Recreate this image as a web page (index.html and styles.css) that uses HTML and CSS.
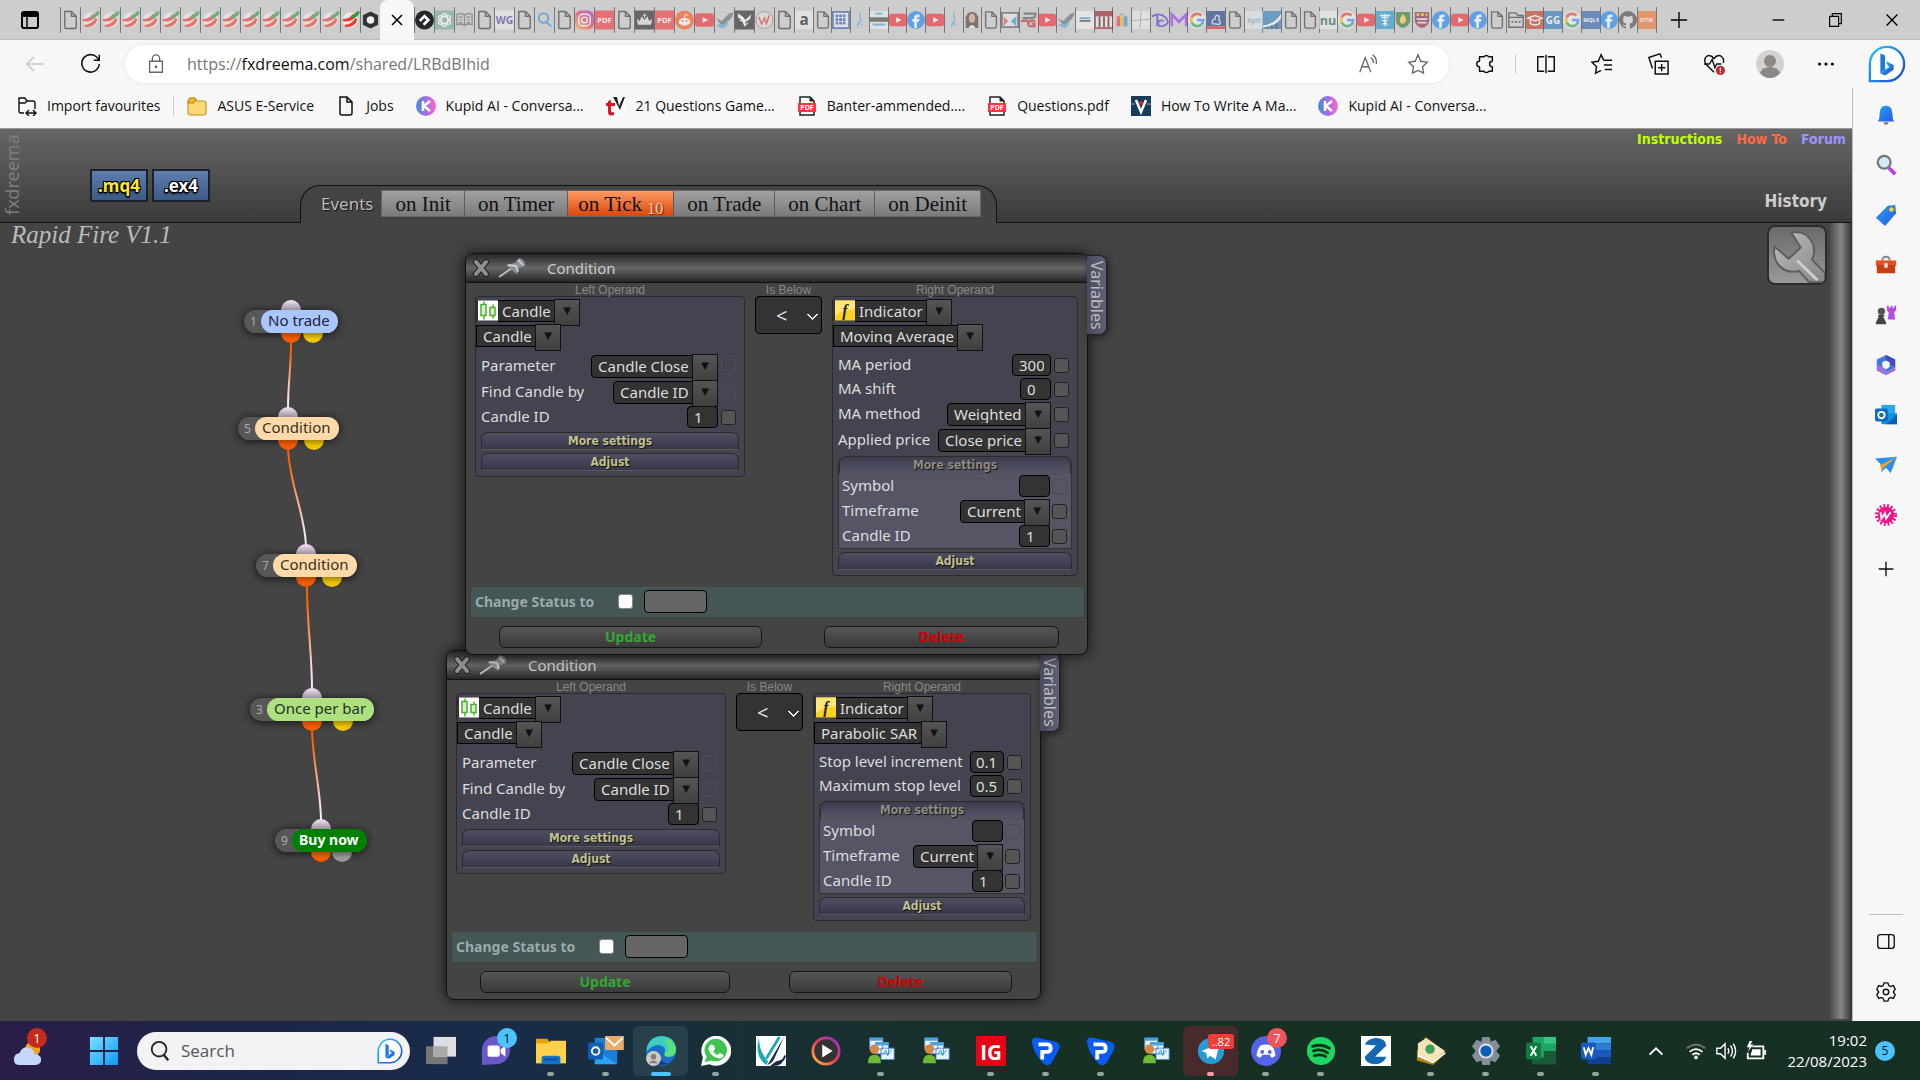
FILE: index.html
```html
<!DOCTYPE html>
<html lang="en">
<head>
    <meta charset="UTF-8">
    <meta name="viewport" content="width=device-width, initial-scale=1.0">
    <title>fxDreema - Rapid Fire V1.1</title>
    <link rel="stylesheet" href="styles.css">
</head>
<body>
    <!-- shared icons -->
    <svg class="defs" aria-hidden="true">
        <defs>
            <linearGradient id="g-kupid"><stop offset="0" stop-color="#3f8fdc"/><stop offset=".55" stop-color="#b06be0"/><stop offset="1" stop-color="#ff6ac0"/></linearGradient>
            <linearGradient id="g-insta" x1="0" y1="1" x2="1" y2="0"><stop offset="0" stop-color="#ffc13b"/><stop offset=".5" stop-color="#f0365f"/><stop offset="1" stop-color="#8a3ad0"/></linearGradient>
            <linearGradient id="g-bing" x1="0" y1="0" x2="1" y2="1"><stop offset="0" stop-color="#29c5f6"/><stop offset="1" stop-color="#1b48c8"/></linearGradient>
            <linearGradient id="g-blue" x1="0" y1="0" x2="1" y2="1"><stop offset="0" stop-color="#22a5f0"/><stop offset="1" stop-color="#2d55e8"/></linearGradient>
            <linearGradient id="g-metal" x1="0" y1="0" x2="1" y2="1"><stop offset="0" stop-color="#bdbdbd"/><stop offset="1" stop-color="#858585"/></linearGradient>
            <linearGradient id="g-win" x1="0" y1="0" x2="1" y2="1"><stop offset="0" stop-color="#7be0ff"/><stop offset="1" stop-color="#0a9bf5"/></linearGradient>
        </defs>
        <symbol id="file" viewBox="0 0 20 20"><path d="M4 1h7l5 5v11a2 2 0 0 1-2 2H6a2 2 0 0 1-2-2V1zM11 1v5h5" fill="none" stroke="currentColor" stroke-width="1.5"/></symbol>
        <symbol id="chili" viewBox="0 0 20 20"><circle cx="10" cy="10" r="8" fill="#eee"/><path d="M2 9c5 0 8-2 10-5l3 1c0 4-6 8-13 6z" fill="#ee3a30"/><path d="M4 15c5 0 9-3 11-7l2 1c0 5-6 10-13 8z" fill="#ee3a30"/><path d="M11 6l6-5 3 0-2 4-5 4z" fill="#2f9a3c"/></symbol>
        <symbol id="hexa" viewBox="0 0 20 20"><path d="M10 1l8 4v10l-8 4-8-4V5z" fill="#333"/><circle cx="10" cy="10" r="4" fill="#eee"/></symbol>
        <symbol id="diam" viewBox="0 0 20 20"><circle cx="10" cy="10" r="10" fill="#23262b"/><path d="M4 10l6-6 6 6-6 6-2-2 4-4-2-2-4 4z" fill="#fff"/></symbol>
        <symbol id="gpt" viewBox="0 0 20 20"><path d="M0 0h20v20H0z" fill="#74aa9c"/><g fill="none" stroke="#fff" stroke-width="1.300"><ellipse cx="10" cy="10" rx="3.500" ry="7"/><ellipse cx="10" cy="10" rx="3.500" ry="7" transform="rotate(60 10 10)"/><ellipse cx="10" cy="10" rx="3.500" ry="7" transform="rotate(120 10 10)"/></g></symbol>
        <symbol id="book" viewBox="0 0 20 20"><path d="M10 5C8 3 4 3 2 4v11c2-1 6-1 8 1 2-2 6-2 8-1V4c-2-1-6-1-8 1zv11M4 7h4M4 10h4M4 13h4M12 7h4M12 10h4M12 13h4" fill="none" stroke="#666" stroke-width="1.300"/></symbol>
        <symbol id="find" viewBox="0 0 20 20"><circle cx="9" cy="8" r="5" fill="none" stroke="#2d8be0" stroke-width="2"/><path d="M12 12l5 5" stroke="#2d8be0" stroke-width="2"/></symbol>
        <symbol id="insta" viewBox="0 0 20 20"><rect width="20" height="20" rx="6" fill="url(#g-insta)"/><rect x="4" y="4" width="12" height="12" rx="4" fill="none" stroke="#fff" stroke-width="1.500"/><circle cx="10" cy="10" r="3" fill="none" stroke="#fff" stroke-width="1.500"/></symbol>
        <symbol id="crown" viewBox="0 0 20 20"><path d="M0 0h20v20H0z" fill="#222"/><path d="M3 15l-1-6 3 2 2-5 3 4 3-4 2 5 3-2-1 6z" fill="#ddd"/><path d="M10 3v5M8 5h4" stroke="#ddd"/></symbol>
        <symbol id="reddit" viewBox="0 0 20 20"><circle cx="10" cy="10" r="10" fill="#ff5414"/><ellipse cx="10" cy="12" rx="6" ry="4" fill="#fff"/><circle cx="8" cy="11" r="1" fill="#ff5414"/><circle cx="12" cy="11" r="1" fill="#ff5414"/><path d="M10 8l1-4 3 1" stroke="#fff" fill="none"/></symbol>
        <symbol id="yt" viewBox="0 0 20 20"><rect y="3" width="20" height="14" rx="3" fill="#f22a30"/><path d="M8 7l6 3-6 3z" fill="#fff"/></symbol>
        <symbol id="rocket" viewBox="0 0 20 20"><path d="M1 8l6 3 8-8 5-1-3 6-6 6-4 2z" fill="#5d6b74"/><path d="M1 16q4-3 8-1l5-5q0 7-6 9z" fill="#58a6d8"/></symbol>
        <symbol id="wing" viewBox="0 0 20 20"><path d="M0 0h20v20H0z" fill="#222"/><path d="M3 3l6 4 2 3 6-6-1 5-5 3v2l4-2-5 5-2-5-4-2 3 0-4-3z" fill="#fff"/></symbol>
        <symbol id="wcirc" viewBox="0 0 20 20"><circle cx="10" cy="10" r="9" fill="#e6dcda" stroke="#8c7a78"/><path d="M4 7l3 7 3-6 2 6 3-9" fill="none" stroke="#e0372e" stroke-width="1.500"/></symbol>
        <symbol id="grid" viewBox="0 0 20 20"><rect x="1" y="1" width="18" height="18" fill="#eef" stroke="#3759a0" stroke-width="2"/><path d="M4 4h3v3H4zM8 4h3v3H8zM12 4h3v3h-3zM4 8h3v3H4zM8 8h3v3H8zM12 8h3v3h-3zM4 12h3v3H4zM8 12h3v3H8zM12 12h3v3h-3z" fill="#2b54a8"/></symbol>
        <symbol id="dancer" viewBox="0 0 20 20"><path d="M10 2c-2 5 3 6 0 9s-3 4-2 7M8 14c3 0 4 1 5 1" fill="none" stroke="#5aa5e6" stroke-width="1.500"/></symbol>
        <symbol id="lines" viewBox="0 0 20 20"><path d="M0 0h20v20H0z" fill="#e9f1f4"/><path d="M0 7h20v5H0z" fill="#444"/><path d="M6 3h8M3 15h14" stroke="#4aa3d0" stroke-width="2"/></symbol>
        <symbol id="fb" viewBox="0 0 20 20"><circle cx="10" cy="10" r="10" fill="#1685f5"/><path d="M8 19v-7H6V9h2V7q0-3 4-3h2v3h-2q-1 0-1 1v1h3l-1 3h-2v7z" fill="#fff"/></symbol>
        <symbol id="woman" viewBox="0 0 20 20"><path d="M3 19V7q2-6 7-6t7 6v12z" fill="#4b3a30"/><ellipse cx="10" cy="8" rx="3.500" ry="5" fill="#d6a486"/><path d="M6 19q4-7 8 0z" fill="#eee"/></symbol>
        <symbol id="xblue" viewBox="0 0 20 20"><path d="M1 2h18v16H1z" fill="#e9e9e9" stroke="#555" stroke-width="2"/><path d="M3 6l5 5-5 6z" fill="#e25a3a"/><path d="M17 6l-6 5 6 6z" fill="#1c9bd8"/></symbol>
        <symbol id="pg" viewBox="0 0 20 20"><path d="M4 3h13q1 5-5 5H3" fill="none" stroke="#555" stroke-width="2.500"/><path d="M1 11h8M17 11q-7-1-8 3 0 4 7 3v-3h-3" fill="none" stroke="#c02636" stroke-width="2.500"/></symbol>
        <symbol id="words" viewBox="0 0 20 20"><path d="M0 0h20v20H0z" fill="#f2f2f2"/><path d="M4 8h12" stroke="#3f8fd0" stroke-width="2"/><path d="M4 11h12" stroke="#444" stroke-width="2"/></symbol>
        <symbol id="piano" viewBox="0 0 20 20"><path d="M0 0h20v20H0z" fill="#9c1d22"/><path d="M1 6h18v12H1z" fill="#eee"/><path d="M5 6v12M10 6v12M15 6v12" stroke="#611" stroke-width="2"/></symbol>
        <symbol id="bag" viewBox="0 0 20 20"><path d="M4 6h4v11H4z" fill="#e43d3d"/><path d="M8 6h4v11H8z" fill="#f1b91c"/><path d="M12 6h4v11h-4z" fill="#3a8bdc"/><path d="M7 6q3-6 6 0" fill="none" stroke="#3a9a4a"/></symbol>
        <symbol id="cross" viewBox="0 0 20 20"><path d="M0 0h20v20H0z" fill="#eee"/><path d="M0 11l20-2M9 20l1-20" stroke="#999"/></symbol>
        <symbol id="disney" viewBox="0 0 20 20"><path d="M1 6q9-5 15 1t-1 9-7-2 6-3M7 5v12" fill="none" stroke="#4a35d8" stroke-width="2"/></symbol>
        <symbol id="mshape" viewBox="0 0 20 20"><path d="M2 17V4l8 8 8-8v13" fill="none" stroke="#9b35f0" stroke-width="3"/></symbol>
        <symbol id="google" viewBox="0 0 20 20"><circle cx="10" cy="10" r="10" fill="#f4f4f4"/><g fill="none" stroke-width="3"><path d="M15 5A7 7 0 0 0 4 7" stroke="#ea4335"/><path d="M4 7a7 7 0 0 0 0 6" stroke="#fbbc05"/><path d="M4 13a7 7 0 0 0 11 2" stroke="#34a853"/><path d="M15 15q2-2 2-5h-7" stroke="#4285f4"/></g></symbol>
        <symbol id="man" viewBox="0 0 20 20"><path d="M0 0h20v17H0z" fill="#1c3a84"/><path d="M0 17h20v3H0z" fill="#d22"/><path d="M6 14q-1-5 3-5 0-5 3-4t1 5q3 2 1 5z" fill="none" stroke="#dde" stroke-width="1.500"/></symbol>
        <symbol id="chart" viewBox="0 0 20 20"><path d="M0 0h20v20H0z" fill="#2b7ab8"/><path d="M0 16Q14 14 20 3v5q-6 9-20 10z" fill="#fff"/><path d="M5 20v-2M10 20v-4M15 20v-6" stroke="#333" stroke-width="2"/></symbol>
        <symbol id="medic" viewBox="0 0 20 20"><path d="M0 0h20v20H0z" fill="#1d9ad0"/><path d="M10 3v14M4 5h12M6 7h8M7 10q6 2 0 5M13 10q-6 2 0 5" fill="none" stroke="#fff" stroke-width="1.500"/></symbol>
        <symbol id="flame" viewBox="0 0 20 20"><path d="M2 1h16v10q-1 6-8 8-7-2-8-8z" fill="#2d7a35"/><path d="M10 3q5 6 3 9-3 4-6 1-2-4 3-10z" fill="#ffcf3a"/></symbol>
        <symbol id="shield" viewBox="0 0 20 20"><path d="M2 1h16v10q-1 6-8 8-7-2-8-8z" fill="#8c2740"/><path d="M4 4h12" stroke="#f0c030" stroke-width="3" stroke-dasharray="3 2"/><path d="M4 9h12M5 13h10" stroke="#e8dcd8" stroke-width="2"/></symbol>
        <symbol id="window" viewBox="0 0 20 20"><path d="M2 18V2h8l2 3h6v13zM2 7h16" fill="none" stroke="currentColor" stroke-width="1.500"/><path d="M5 12h10" stroke="currentColor" stroke-width="2" stroke-dasharray="2 2"/></symbol>
        <symbol id="grad" viewBox="0 0 20 20"><path d="M0 0h20v20H0z" fill="#c23a20"/><path d="M2 8l8-3 8 3-8 3zM5 10v4q5 3 10 0v-4" fill="none" stroke="#fff" stroke-width="1.500"/></symbol>
        <symbol id="git" viewBox="0 0 20 20"><circle cx="10" cy="10" r="10" fill="#444"/><path d="M5 5l3 1h4l3-1v3q2 5-3 6v6H8v-3q-3 1-4-2l4 1v-2q-5-1-3-6z" fill="#ddd"/></symbol>
        <symbol id="kupid" viewBox="0 0 20 20"><circle cx="10" cy="10" r="10" fill="url(#g-kupid)"/><path d="M7 5v10M14 5l-6 5 6 5" fill="none" stroke="#fff" stroke-width="2.500"/></symbol>
        <symbol id="bing" viewBox="0 0 40 40"><path d="M2 38V20A18 18 0 1 1 20 38z" fill="#fff" stroke="url(#g-bing)" stroke-width="2.500"/><path d="M13 9l5 2v15l-5 4z" fill="#1a7ae0"/><path d="M13 30l5 2 9-6v-5l-8-4 2 5 2 1-5 3z" fill="url(#g-bing)"/></symbol>
        <symbol id="candles" viewBox="0 0 20 20"><path d="M0 0h20v20H0z" fill="#fff"/><path d="M6 1v3M6 15v4M15 4v3M15 15v3M3 4h5v11H3zM12 7h5v8h-5z" fill="#d8f0d0" stroke="#4ab02a" stroke-width="1.500"/></symbol>
        <symbol id="close" viewBox="0 0 20 20"><path d="M5 4l10 12M15 4L5 16" stroke="#222" stroke-width="6" stroke-linecap="round"/><path d="M5 4l10 12M15 4L5 16" stroke="#8f8f8f" stroke-width="4" stroke-linecap="round"/></symbol>
        <symbol id="pin" viewBox="0 0 28 22"><path d="M1 20l13-9" stroke="#bbb" stroke-width="2"/><path d="M8 8l9-2 4-5q7 2 6 8l-6 2-2 6z" fill="#8c9297"/><path d="M10 8l8 1 2 6M20 3l5 5" stroke="#d6dade" stroke-width="1.500" fill="none"/></symbol>
        <symbol id="traders" viewBox="0 0 32 32"><path d="M4 2h14v12H4zM10 7h14v12H10zM16 13h14v12H16z" fill="#e9f4ff" stroke="#4c8fd0"/><path d="M4 2h14v3H4zM10 7h14v3H10z" fill="#4ba3dd"/><path d="M18 20l3-5 2 6 4-6" stroke="#29c" fill="none"/><circle cx="9" cy="14" r="5" fill="#d88744"/><path d="M2 29q0-9 7-9t7 9z" fill="#6dbb34"/></symbol>
        <symbol id="plus500" viewBox="0 0 32 32"><path d="M1 6q0-6 7-4l18 4q6 2 4 8L23 27q-4 7-10 2Q3 19 1 6z" fill="#0a5cf5"/><path d="M8 9h9q4 0 4 4t-4 4h-5v8" stroke="#fff" stroke-width="4" fill="none"/></symbol>
    </svg>

    <header class="tabstrip">
        <button class="strip-btn" aria-label="Tab actions"><svg viewBox="0 0 20 20"><rect x="2" y="2" width="16" height="16" rx="2" fill="none" stroke="#000" stroke-width="2"/><path d="M2 3h16v4H2z"/><path d="M7 6v11" stroke="#000" stroke-width="1.500"/></svg></button>
        <div class="tabs" id="tabs-before"></div>
        <button class="tab-active" aria-label="Close tab"><svg viewBox="0 0 20 20"><path d="M5 5l10 10M15 5L5 15" stroke="#000" stroke-width="1.500"/></svg></button>
        <div class="tabs" id="tabs-after"></div>
        <div class="tabs tight" id="tabs-tight"></div>
        <button class="new-tab" aria-label="New tab"><svg viewBox="0 0 20 20"><path d="M10 1v18M1 10h18" stroke="#000" stroke-width="1.500"/></svg></button>
        <div class="win-controls">
            <button aria-label="Minimise"><svg viewBox="0 0 20 20"><path d="M4 10h13" stroke="#000" stroke-width="1.500"/></svg></button>
            <button aria-label="Restore"><svg viewBox="0 0 20 20"><path d="M4 6h10v11H4zM7 6V3h10v11h-3" fill="none" stroke="#000" stroke-width="1.300"/></svg></button>
            <button aria-label="Close"><svg viewBox="0 0 20 20"><path d="M4 4l12 12M16 4L4 16" stroke="#000" stroke-width="1.500"/></svg></button>
        </div>
    </header>

    <nav class="toolbar">
        <button class="tool" aria-label="Back"><svg viewBox="0 0 24 24"><path d="M22 12H3M11 4l-8 8 8 8" fill="none" stroke="#c8c8c8" stroke-width="1.500"/></svg></button>
        <button class="tool" aria-label="Reload"><svg viewBox="0 0 24 24"><path d="M20 7a9.500 9.500 0 1 0 1 5M21 2v6h-6" fill="none" stroke="#111" stroke-width="1.700"/></svg></button>
        <div class="address">
            <svg viewBox="0 0 24 24"><path d="M5 9h14v12H5zM8 9V6a4 4 0 0 1 8 0v3" fill="none" stroke="#666" stroke-width="1.500"/><circle cx="12" cy="15" r="1.500" fill="#666"/></svg>
            <a class="url" href="#">https://<b>fxdreema.com</b>/shared/LRBdBIhid</a>
            <button aria-label="Read aloud"><svg viewBox="0 0 24 24"><path d="M3 21l6-16 6 16M5 15h8M15 5q3 2 3 6M17 2q5 3 4 10" fill="none" stroke="#666" stroke-width="1.400"/></svg></button>
            <button aria-label="Add to favourites"><svg viewBox="0 0 24 24"><path d="M12 2l3 7 7 1-5 5 1 7-6-3-6 3 1-7-5-5 7-1z" fill="none" stroke="#666" stroke-width="1.500"/></svg></button>
        </div>
        <button class="tool" aria-label="Extensions"><svg viewBox="0 0 24 24"><path d="M6 4h5a3 3 0 0 1 5 0h4v5a3 3 0 0 0 0 6v5h-4a3 3 0 0 1-5 0H6v-5a3 3 0 0 1 0-6z" fill="none" stroke="#111" stroke-width="1.600" stroke-linejoin="round"/></svg></button>
        <i class="tool-sep"></i>
        <button class="tool" aria-label="Split screen"><svg viewBox="0 0 24 24"><path d="M10 4H3v16h7M14 4h7v16h-7M12 2v20" fill="none" stroke="#111" stroke-width="1.600"/></svg></button>
        <button class="tool" aria-label="Favourites"><svg viewBox="0 0 24 24"><path d="M14 8l-3-6-3 7-7 1 5 5-1 7 6-3M14 8h9M14 13h9M15 18h8" fill="none" stroke="#111" stroke-width="1.600"/></svg></button>
        <button class="tool" aria-label="Collections"><svg viewBox="0 0 24 24"><path d="M9 9h14v14H9zM16 12v8M12 16h8M6 17l-4-12 12-4 2 4" fill="none" stroke="#111" stroke-width="1.600"/></svg></button>
        <button class="tool" aria-label="Browser essentials"><svg viewBox="0 0 24 24"><path d="M12 21L3 12q-3-6 2-9 4-1 7 3 3-4 7-3 5 3 3 8M1 12h6l3-5 3 9 2-4h5" fill="none" stroke="#111" stroke-width="1.500"/><circle cx="19" cy="19" r="5" fill="#c4262e"/><path d="M19 16v4M19 21v1" stroke="#fff" stroke-width="1.500"/></svg></button>
        <button class="tool" aria-label="Profile"><svg class="avatar" viewBox="0 0 28 28"><circle cx="14" cy="14" r="14" fill="#d5d2cf"/><circle cx="14" cy="11" r="6" fill="#8c8885"/><path d="M4 23q2-6 10-6t10 6q-4 5-10 5t-10-5z" fill="#8c8885"/></svg></button>
        <button class="tool" aria-label="Settings and more"><svg viewBox="0 0 24 24"><circle cx="5" cy="12" r="1.700"/><circle cx="12" cy="12" r="1.700"/><circle cx="19" cy="12" r="1.700"/></svg></button>
        <button class="bing" aria-label="Bing"><svg><use href="#bing"/></svg></button>
    </nav>

    <div class="main">
        <div class="view">
            <nav class="bookmarks">
                <a href="#"><svg viewBox="0 0 20 20"><path d="M7 17H4a2 2 0 0 1-2-2V2h6l2 3h6a2 2 0 0 1 2 2v6M2 7h6l2-2M9 17h10M12 14l-3 3 3 3M16 14l3 3-3 3" fill="none" stroke="#111" stroke-width="1.400"/></svg>Import favourites</a>
                <i></i>
                <a href="#"><svg viewBox="0 0 20 20"><path d="M1 5q0-3 3-3h4l2 3h7q2 0 2 2v10q0 2-2 2H3q-2 0-2-2z" fill="#fcd977" stroke="#b98a14"/><path d="M1 7h6l2-3-1-2H3Q1 3 1 7z" fill="#eeb72d" stroke="#b98a14"/></svg>ASUS E-Service</a>
                <a href="#"><svg><use href="#file"/></svg>Jobs</a>
                <a href="#"><svg><use href="#kupid"/></svg>Kupid AI - Conversa...</a>
                <a href="#"><svg viewBox="0 0 20 20"><path d="M0 0h20v20H0z" fill="#fff"/><path d="M8 1h4l2 9 4-9h2l-5 13z" fill="#222"/><path d="M3 5l3-1v3h4v3H6v5q1 2 3 1v3q-6 2-6-3v-6H1V7h2z" fill="#e3151f"/></svg>21 Questions Game...</a>
                <a href="#"><svg viewBox="0 0 20 20"><path d="M3 1h10l4 4v14H3z" fill="#fff" stroke="#222" stroke-width="1.500"/><path d="M13 1v4h4" fill="#222" stroke="#222"/><path d="M1 7h18v9H1z" fill="#f7363f"/><text x="10" y="14" font-size="7" font-weight="700" fill="#fff" text-anchor="middle">PDF</text></svg>Banter-ammended....</a>
                <a href="#"><svg viewBox="0 0 20 20"><path d="M3 1h10l4 4v14H3z" fill="#fff" stroke="#222" stroke-width="1.500"/><path d="M13 1v4h4" fill="#222" stroke="#222"/><path d="M1 7h18v9H1z" fill="#f7363f"/><text x="10" y="14" font-size="7" font-weight="700" fill="#fff" text-anchor="middle">PDF</text></svg>Questions.pdf</a>
                <a href="#"><svg viewBox="0 0 20 20"><path d="M0 0h20v20H0z" fill="#173c5c"/><path d="M5 4l5 12 5-12" fill="none" stroke="#fff" stroke-width="2.500"/><circle cx="10" cy="7" r="2" fill="#d22"/><path d="M0 8h4M16 8h4" stroke="#9ab"/></svg>How To Write A Ma...</a>
                <a href="#"><svg><use href="#kupid"/></svg>Kupid AI - Conversa...</a>
            </nav>

            <main class="app">
                <div class="app-header">
                    <div class="brand">fxdreema</div>
                    <div class="downloads">
                        <button class="mq">.mq4</button>
                        <button class="ex">.ex4</button>
                    </div>
                    <div class="events">
                        <span>Events</span>
                        <div class="event-tabs">
                            <button>on Init</button><button>on Timer</button><button class="current">on Tick <sub>10</sub></button><button>on Trade</button><button>on Chart</button><button>on Deinit</button>
                        </div>
                    </div>
                    <div class="app-links">
                        <div>
                            <a class="lime" href="#">Instructions</a>
                            <a class="coral" href="#">How To</a>
                            <a class="lilac" href="#">Forum</a>
                        </div>
                        <a class="history" href="#">History</a>
                    </div>
                </div>

                <div class="workspace">
                    <div class="canvas">
                        <h1>Rapid Fire V1.1</h1>

                        <svg class="wires" aria-hidden="true">
                            <defs><linearGradient id="g-wire" x1="0" y1="0" x2="0" y2="1"><stop offset=".15" stop-color="#ff6200"/><stop offset=".85" stop-color="#f6e6f8"/></linearGradient></defs>
                            <path d="M291 120C291 145 288 160 288 186"/>
                            <path d="M288 226C290 264 305 290 306 323"/>
                            <path d="M307 364C307 400 312 430 312 467"/>
                            <path d="M312 507C313 540 321 570 321 598"/>
                        </svg>

                        <div class="node n1"><small>1</small><span>No trade</span><i class="in"></i><i class="out"></i><i class="alt"></i></div>
                        <div class="node orange n5"><small>5</small><span>Condition</span><i class="in"></i><i class="out"></i><i class="alt"></i></div>
                        <div class="node orange n7"><small>7</small><span>Condition</span><i class="in"></i><i class="out"></i><i class="alt"></i></div>
                        <div class="node green n3"><small>3</small><span>Once per bar</span><i class="in"></i><i class="out"></i><i class="alt"></i></div>
                        <div class="node buy n9"><small>9</small><span>Buy now</span><i class="in"></i><i class="out"></i><i class="alt"></i></div>

                        <section class="panel panel-sar">
                            <div class="panel-title"><button aria-label="Close"><svg><use href="#close"/></svg></button><svg class="pin"><use href="#pin"/></svg><h2>Condition</h2></div>
                            <button class="vars">Variables</button>
                            <div class="operands">
                                <div class="operand">
                                    <h3>Left Operand</h3>
                                    <div class="box">
                                        <div class="picker"><svg><use href="#candles"/></svg><span class="select"><select aria-label="Left type"><option>Candle</option></select></span></div>
                                        <div class="picker"><span class="select"><select aria-label="Left source"><option>Candle</option></select></span></div>
                                        <div class="rows">
                                            <div class="row"><label for="s-param">Parameter</label><span class="select"><select id="s-param"><option>Candle Close</option></select></span><input class="off" type="checkbox" aria-label="Adjust parameter" disabled></div>
                                            <div class="row"><label for="s-find">Find Candle by</label><span class="select"><select id="s-find"><option>Candle ID</option></select></span><input class="off" type="checkbox" aria-label="Adjust find" disabled></div>
                                            <div class="row short"><label for="s-cid">Candle ID</label><input id="s-cid" type="text" value="1"><input type="checkbox" aria-label="Adjust candle ID"></div>
                                        </div>
                                        <button class="fold">More settings</button>
                                        <button class="fold">Adjust</button>
                                    </div>
                                </div>
                                <div class="operator">
                                    <h3>Is Below</h3>
                                    <select aria-label="Operator"><option>&lt;</option></select>
                                </div>
                                <div class="operand right">
                                    <h3>Right Operand</h3>
                                    <div class="box">
                                        <div class="picker"><svg viewBox="0 0 20 20"><path d="M0 0h20v20H0z" fill="#ffd21f"/><path d="M0 0h20v9Q8 9 0 15z" fill="#ffe678"/><text class="fn" x="10" y="15" text-anchor="middle">f</text></svg><span class="select"><select aria-label="Right type"><option>Indicator</option></select></span></div>
                                        <div class="picker"><span class="select"><select aria-label="Indicator"><option>Parabolic SAR</option></select></span></div>
                                        <div class="rows">
                                            <div class="row short"><label for="s-inc">Stop level increment</label><input id="s-inc" type="text" value="0.1"><input type="checkbox" aria-label="Adjust increment"></div>
                                            <div class="row short"><label for="s-max">Maximum stop level</label><input id="s-max" type="text" value="0.5"><input type="checkbox" aria-label="Adjust maximum"></div>
                                        </div>
                                        <div class="more">
                                            <button class="fold open">More settings</button>
                                            <div class="row short"><label for="s-sym">Symbol</label><input id="s-sym" type="text"><input class="off" type="checkbox" aria-label="Adjust symbol" disabled></div>
                                            <div class="row"><label for="s-tf">Timeframe</label><span class="select"><select id="s-tf"><option>Current</option></select></span><input type="checkbox" aria-label="Adjust timeframe"></div>
                                            <div class="row short"><label for="s-rid">Candle ID</label><input id="s-rid" type="text" value="1"><input type="checkbox" aria-label="Adjust right candle ID"></div>
                                        </div>
                                        <button class="fold">Adjust</button>
                                    </div>
                                </div>
                            </div>
                            <div class="status"><label for="s-status">Change Status to</label><input id="s-status" type="checkbox"><input type="text" aria-label="Status"></div>
                            <div class="actions"><button class="update">Update</button><button class="delete">Delete</button></div>
                        </section>

                        <section class="panel panel-ma">
                            <div class="panel-title"><button aria-label="Close"><svg><use href="#close"/></svg></button><svg class="pin"><use href="#pin"/></svg><h2>Condition</h2></div>
                            <button class="vars">Variables</button>
                            <div class="operands">
                                <div class="operand">
                                    <h3>Left Operand</h3>
                                    <div class="box">
                                        <div class="picker"><svg><use href="#candles"/></svg><span class="select"><select aria-label="Left type"><option>Candle</option></select></span></div>
                                        <div class="picker"><span class="select"><select aria-label="Left source"><option>Candle</option></select></span></div>
                                        <div class="rows">
                                            <div class="row"><label for="m-param">Parameter</label><span class="select"><select id="m-param"><option>Candle Close</option></select></span><input class="off" type="checkbox" aria-label="Adjust parameter" disabled></div>
                                            <div class="row"><label for="m-find">Find Candle by</label><span class="select"><select id="m-find"><option>Candle ID</option></select></span><input class="off" type="checkbox" aria-label="Adjust find" disabled></div>
                                            <div class="row short"><label for="m-cid">Candle ID</label><input id="m-cid" type="text" value="1"><input type="checkbox" aria-label="Adjust candle ID"></div>
                                        </div>
                                        <button class="fold">More settings</button>
                                        <button class="fold">Adjust</button>
                                    </div>
                                </div>
                                <div class="operator">
                                    <h3>Is Below</h3>
                                    <select aria-label="Operator"><option>&lt;</option></select>
                                </div>
                                <div class="operand right">
                                    <h3>Right Operand</h3>
                                    <div class="box">
                                        <div class="picker"><svg viewBox="0 0 20 20"><path d="M0 0h20v20H0z" fill="#ffd21f"/><path d="M0 0h20v9Q8 9 0 15z" fill="#ffe678"/><text class="fn" x="10" y="15" text-anchor="middle">f</text></svg><span class="select"><select aria-label="Right type"><option>Indicator</option></select></span></div>
                                        <div class="picker"><span class="select"><select aria-label="Indicator"><option>Moving Average</option></select></span></div>
                                        <div class="rows">
                                            <div class="row short"><label for="m-period">MA period</label><input id="m-period" type="text" value="300"><input type="checkbox" aria-label="Adjust period"></div>
                                            <div class="row short"><label for="m-shift">MA shift</label><input id="m-shift" type="text" value="0"><input type="checkbox" aria-label="Adjust shift"></div>
                                            <div class="row"><label for="m-method">MA method</label><span class="select"><select id="m-method"><option>Weighted</option></select></span><input type="checkbox" aria-label="Adjust method"></div>
                                            <div class="row"><label for="m-price">Applied price</label><span class="select"><select id="m-price"><option>Close price</option></select></span><input type="checkbox" aria-label="Adjust price"></div>
                                        </div>
                                        <div class="more">
                                            <button class="fold open">More settings</button>
                                            <div class="row short"><label for="m-sym">Symbol</label><input id="m-sym" type="text"><input class="off" type="checkbox" aria-label="Adjust symbol" disabled></div>
                                            <div class="row"><label for="m-tf">Timeframe</label><span class="select"><select id="m-tf"><option>Current</option></select></span><input type="checkbox" aria-label="Adjust timeframe"></div>
                                            <div class="row short"><label for="m-rid">Candle ID</label><input id="m-rid" type="text" value="1"><input type="checkbox" aria-label="Adjust right candle ID"></div>
                                        </div>
                                        <button class="fold">Adjust</button>
                                    </div>
                                </div>
                            </div>
                            <div class="status"><label for="m-status">Change Status to</label><input id="m-status" type="checkbox"><input type="text" aria-label="Status"></div>
                            <div class="actions"><button class="update">Update</button><button class="delete">Delete</button></div>
                        </section>
                    </div>
                    <button class="wrench" aria-label="Tools"><svg viewBox="0 0 60 60"><path d="M6 21l15 13 13-12L24 6q16-3 23 12 3 9-1 17l14 14v10H43L32 47Q18 51 9 39 4 31 6 21z" fill="url(#g-metal)" stroke="#5c5c5c" stroke-width="2"/><path d="M30 36l22 21" stroke="#d0d0d0" stroke-width="3"/></svg></button>
                    <div class="divider"></div>
                </div>
            </main>
        </div>

        <aside class="sidebar">
            <button aria-label="Notifications"><svg viewBox="0 0 24 24"><path d="M3 19q2-2 2-8 0-9 7-9t7 9q0 6 2 8z" fill="url(#g-blue)"/><path d="M9 20h6q-1 3-3 3t-3-3z" fill="#777"/></svg></button>
            <button aria-label="Search"><svg viewBox="0 0 24 24"><circle cx="10" cy="9" r="7" fill="#cfeaf8" stroke="#777" stroke-width="2.500"/><path d="M15 15l7 7" stroke="#b93df0" stroke-width="4"/></svg></button>
            <button aria-label="Shopping"><svg viewBox="0 0 24 24"><path d="M14 2l8-1 1 9L11 24 1 15z" fill="url(#g-blue)"/><circle cx="18" cy="6" r="2.500" fill="#ffd02a"/></svg></button>
            <button aria-label="Tools"><svg viewBox="0 0 24 24"><path d="M8 7q0-4 4-4t4 4" fill="none" stroke="#888" stroke-width="2"/><path d="M1 7h22v6H1z" fill="#e6501e"/><path d="M2 12h20v9H2z" fill="#c83e10"/><path d="M10 10h4v5h-4z" fill="#ddd"/></svg></button>
            <button aria-label="Games"><svg viewBox="0 0 24 24"><circle cx="7" cy="8" r="4" fill="#555"/><path d="M3 12h8l-2 2 3 6v2H1v-2l3-6z" fill="#444"/><path d="M13 2h2v2h2V2h2v2h2V2h2v5l-2 2 1 8h-8l1-8-2-2z" fill="#b24af0"/></svg></button>
            <button aria-label="Microsoft 365"><svg viewBox="0 0 24 24"><path d="M12 1l10 5v12l-10 5L2 18V6z" fill="#3b78e0"/><path d="M2 12l6 2 5 5 9-5v4l-10 5-10-5z" fill="#a272dc"/><path d="M12 1l10 5v8l-6-3-4-4z" fill="#4548c0"/><path d="M12 7l4 2v5l-4 3-4-3V9z" fill="#f7f7f7"/></svg></button>
            <button aria-label="Outlook"><svg viewBox="0 0 24 24"><path d="M7 1h15v12H7z" fill="#28a8ea"/><path d="M7 10h17v12H7z" fill="#1490df"/><path d="M24 12l-12 10h12z" fill="#0a5fb8"/><rect y="5" width="14" height="14" rx="2" fill="#0f6cbd"/><circle cx="7" cy="12" r="3.500" fill="none" stroke="#fff" stroke-width="2"/></svg></button>
            <button aria-label="Drop"><svg viewBox="0 0 24 24"><path d="M0 5l24-2-7 18-5-6-5 5-1-9z" fill="#2a92ee"/><path d="M6 12l18-9L9 15l-2 5z" fill="#f4a51c"/></svg></button>
            <button aria-label="Wow"><svg viewBox="0 0 24 24"><circle cx="12" cy="12" r="10" fill="none" stroke="#f3148c" stroke-width="4" stroke-dasharray="2 2"/><circle cx="12" cy="12" r="9" fill="#f3148c"/><path d="M6 9l1 7 4-6 1 6 5-7" fill="none" stroke="#fff" stroke-width="2"/></svg></button>
            <button class="add" aria-label="Add"><svg viewBox="0 0 24 24"><path d="M12 4v16M4 12h16" stroke="#111" stroke-width="1.500"/></svg></button>
            <div class="sidebar-foot">
                <button aria-label="Hide sidebar"><svg viewBox="0 0 24 24"><rect x="3" y="4" width="18" height="15" rx="3" fill="none" stroke="#111" stroke-width="1.500"/><path d="M15 4v15" stroke="#111" stroke-width="1.500"/></svg></button>
                <button aria-label="Sidebar settings"><svg viewBox="0 0 24 24"><path d="M10 2h4l1 3 2 1 3-1 2 4-2 3 2 3-2 4-3-1-2 1-1 3h-4l-1-3-2-1-3 1-2-4 2-3-2-3 2-4 3 1 2-1z" fill="none" stroke="#111" stroke-width="1.500"/><circle cx="12" cy="12" r="3" fill="none" stroke="#111" stroke-width="1.500"/></svg></button>
            </div>
        </aside>
    </div>

    <footer class="taskbar">
        <button class="weather" aria-label="Weather"><svg viewBox="0 0 32 32"><circle cx="21" cy="14" r="8" fill="#f6a121"/><path d="M7 31q-6 0-6-6t6-7q2-6 8-6t8 7q7 1 7 6t-6 6z" fill="#c3d8fb"/></svg><b class="red">1</b></button>
        <button class="start" aria-label="Start"><svg viewBox="0 0 32 32"><path d="M1 1h14v14H1zM17 1h14v14H17zM1 17h14v14H1zM17 17h14v14H17z" fill="url(#g-win)"/></svg></button>
        <div class="search"><svg viewBox="0 0 24 24"><circle cx="11" cy="10" r="8" fill="none" stroke="#222" stroke-width="2"/><path d="M16 16l5 6" stroke="#222" stroke-width="2.500"/></svg><input type="text" placeholder="Search" aria-label="Search"><svg class="search-bing"><use href="#bing"/></svg></div>
        <button aria-label="Task view"><svg viewBox="0 0 32 32"><path d="M0 11h23v19H0z" fill="#777"/><path d="M8 1h24v21H8z" fill="#f2f2f2" opacity=".9"/><path d="M8 11h15v11H8z" fill="#aaa"/></svg></button>
        <button aria-label="Chat"><svg viewBox="0 0 32 32"><path d="M1 31V16A15 15 0 1 1 16 30z" fill="#6a58c8"/><rect x="7" y="10" width="13" height="12" rx="2" fill="#fff"/><path d="M21 14l5-4v12l-5-4z" fill="#fff"/></svg><b class="cyan">1</b></button>
        <button class="run" aria-label="File Explorer"><svg viewBox="0 0 32 32"><path d="M0 3h12l3 4h17v22H0z" fill="#e2a40c"/><path d="M0 8h12l4-3h16v24H0z" fill="#ffd04a"/><path d="M6 30v-6q0-3 3-3h14q3 0 3 3v6z" fill="#1273c8"/><path d="M9 25h14" stroke="#0a4f94" stroke-width="2"/></svg></button>
        <button class="run" aria-label="Outlook"><svg class="mail" viewBox="0 0 38 32"><path d="M7 2h24v28H7z" fill="#1a7fd6"/><path d="M7 14l24 16H7z" fill="#2ba3f0"/><rect x="0" y="7" width="16" height="18" rx="2" fill="#0f5fb8"/><circle cx="8" cy="16" r="4" fill="none" stroke="#fff" stroke-width="2"/><path d="M18 0h20v15H18z" fill="#e9ad6a"/><path d="M19 2l9 8 9-8" fill="none" stroke="#fff" stroke-width="2"/></svg></button>
        <button class="run active" aria-label="Edge"><svg viewBox="0 0 32 32"><circle cx="16" cy="16" r="16" fill="#1a6fc4"/><path d="M1 12Q5 0 17 0q14 1 15 14 0 8-8 8-6 0-4-4 2-6-4-8Q8 8 1 16z" fill="#3bd0c0"/><path d="M20 2q12 3 12 13 0 7-8 7-5 0-4-4 8 0 0-16z" fill="#5ce07a"/><path d="M14 14q-4 12 8 15 5 0 8-4-8 8-20 5z" fill="#123f82"/><circle cx="8" cy="24" r="8" fill="#cfcac6"/><circle cx="8" cy="22" r="3" fill="#857f7b"/><path d="M3 29q5-6 10 0z" fill="#857f7b"/></svg></button>
        <button class="run" aria-label="WhatsApp"><svg viewBox="0 0 32 32"><path d="M0 32l2-9A16 16 0 1 1 9 30z" fill="#fff"/><path d="M4 28l2-6a12 12 0 1 1 5 4z" fill="#3fc351"/><path d="M11 9l3 1 1 4-2 2q2 4 5 4l2-2 4 2q0 4-4 4-9-1-12-9 0-5 3-6z" fill="#fff"/></svg></button>
        <button aria-label="Trading"><svg viewBox="0 0 32 32"><path d="M0 0h32v32H0z" fill="#fff"/><path d="M3 2q-5 20 8 29l2-4Q4 18 3 2z" fill="#1fa9b8"/><path d="M30 1L14 28l-2 3q6-2 8-8z" fill="#16294a"/><path d="M18 31q10 0 13-10-1 6-9 7z" fill="#16294a" stroke="#16294a" stroke-width="2"/><path d="M25 1L11 24" stroke="#1fa9b8" stroke-width="3"/></svg></button>
        <button aria-label="Media Player"><svg viewBox="0 0 32 32"><circle cx="16" cy="16" r="14" fill="#333" stroke="url(#g-insta)" stroke-width="3"/><path d="M12 9l11 7-11 7z" fill="#fff"/></svg></button>
        <button class="run" aria-label="Terminal 1"><svg><use href="#traders"/></svg></button>
        <button aria-label="Terminal 2"><svg><use href="#traders"/></svg></button>
        <button class="run" aria-label="IG"><svg viewBox="0 0 32 32"><path d="M0 0h32v32H0z" fill="#e40414"/><text x="16" y="26" font-size="22" fill="#fff" text-anchor="middle" font-weight="700">IG</text></svg></button>
        <button class="run" aria-label="Plus500"><svg><use href="#plus500"/></svg></button>
        <button class="run" aria-label="Plus500 demo"><svg><use href="#plus500"/></svg></button>
        <button aria-label="Terminal 3"><svg><use href="#traders"/></svg></button>
        <button class="run alert" aria-label="Telegram"><svg viewBox="0 0 32 32"><circle cx="16" cy="16" r="14" fill="#249bd6"/><path d="M6 16l19-8-4 17-6-4-3 3-1-6z" fill="#fff"/></svg><b class="square">..82</b></button>
        <button class="run" aria-label="Discord"><svg viewBox="0 0 32 32"><circle cx="16" cy="16" r="16" fill="#5562ea"/><path d="M10 10q6-2 12 0 4 5 4 11-3 3-5 1l-1-2h-8l-1 2q-2 2-5-1 0-6 4-11z" fill="#fff"/><circle cx="12" cy="17" r="2" fill="#5562ea"/><circle cx="20" cy="17" r="2" fill="#5562ea"/></svg><b class="pink">7</b></button>
        <button class="run" aria-label="Spotify"><svg viewBox="0 0 32 32"><circle cx="16" cy="16" r="15" fill="#1ed760"/><path d="M7 11q10-3 18 2M8 16q8-3 15 2M9 21q7-2 12 1" fill="none" stroke="#12301c" stroke-width="3" stroke-linecap="round"/></svg></button>
        <button aria-label="Zulu"><svg viewBox="0 0 32 32"><path d="M0 0h32v32H0z" fill="#fff"/><path d="M4 9q4-7 12-7 10 0 11 8L15 22h12q-3 8-12 8-11-1-11-8l12-12z" fill="#1268b3"/></svg></button>
        <button class="run" aria-label="Guide"><svg viewBox="0 0 32 32"><path d="M1 16L10 1l22 17-14 13L1 26z" fill="#b8860b"/><path d="M2 8l9-6 20 14-13 11-16-6z" fill="#f2e6b8"/><path d="M2 21l16 7 13-10" fill="none" stroke="#fff" stroke-width="2"/><circle cx="15" cy="14" r="5" fill="#3c9c58"/></svg></button>
        <button class="run" aria-label="Settings"><svg viewBox="0 0 32 32"><path d="M12 1h8l1 5 5-2 5 7-4 5 4 5-5 7-5-2-1 5h-8l-1-5-5 2-5-7 4-5-4-5 5-7 5 2z" fill="#858d98"/><circle cx="16" cy="16" r="8" fill="#dde3ea"/><circle cx="16" cy="16" r="6" fill="#0f5fb8"/></svg></button>
        <button class="run" aria-label="Excel"><svg viewBox="0 0 32 32"><path d="M7 1h25v29H7z" fill="#21a366"/><path d="M19 1h13v7H19z" fill="#33c481"/><path d="M19 16h13v14H7v-7h12z" fill="#185c37"/><rect y="7" width="16" height="18" rx="2" fill="#107c41"/><path d="M5 11l6 10M11 11L5 21" stroke="#fff" stroke-width="2"/></svg></button>
        <button class="run" aria-label="Word"><svg viewBox="0 0 32 32"><path d="M7 1h25v7H7z" fill="#41a5ee"/><path d="M7 8h25v7H7z" fill="#2b7cd3"/><path d="M7 15h25v8H7z" fill="#185abd"/><path d="M7 23h25v7H7z" fill="#103f91"/><rect y="7" width="16" height="18" rx="2" fill="#185abd"/><path d="M3 12l2 8 3-7 3 7 2-8" fill="none" stroke="#fff" stroke-width="2"/></svg></button>
        <div class="tray">
            <svg viewBox="0 0 24 24"><path d="M5 16l7-7 7 7" fill="none" stroke="#fff" stroke-width="2"/></svg>
            <svg viewBox="0 0 24 24"><path d="M2 9q10-8 20 0" fill="none" stroke="#777" stroke-width="2"/><path d="M5 13q7-6 14 0M8 16q4-3 8 0" fill="none" stroke="#fff" stroke-width="2"/><circle cx="12" cy="19" r="2" fill="#fff"/></svg>
            <svg viewBox="0 0 24 24"><path d="M2 9h4l5-5v16l-5-5H2zM14 9q2 3 0 6M17 6q4 6 0 12M20 4q5 8 0 16" fill="none" stroke="#fff" stroke-width="1.500"/></svg>
            <svg viewBox="0 0 24 24"><path d="M8 7h12v13H3v-6" fill="none" stroke="#fff" stroke-width="2"/><path d="M8 10h9v7H6zM21 11h2v5h-2zM5 1l-3 7h3l-2 5 6-8H6l2-4z" fill="#fff"/></svg>
            <div class="clock">19:02<br>22/08/2023</div>
            <b>5</b>
        </div>
    </footer>

    <script>
        const before = ['file', ...Array(13).fill('chili'), 'chili on', 'hexa on'];
        const after = ['diam on', 'gpt', 'book', 'file', 'wg', 'file', 'find', 'file', 'insta', 'pdf',
            'file', 'crown', 'pdf', 'reddit', 'yt', 'rocket', 'wing', 'wcirc', 'file'];
        const tight = ['amazon', 'file', 'grid', 'dancer', 'lines', 'yt', 'fb', 'yt', 'dancer', 'woman',
            'file', 'xblue', 'pg', 'yt', 'rocket', 'words', 'piano', 'bag', 'cross', 'disney',
            'mshape', 'google', 'man', 'file', 'script', 'chart', 'file', 'file', 'nu', 'google',
            'yt', 'medic', 'flame', 'shield', 'fb', 'yt', 'fb', 'file', 'window', 'grad',
            'gg', 'google', 'mql', 'fb', 'git', 'dttw'];

        // favicons with lettering: tile colour, text colour, size, text
        const lettered = {
            wg: ['#eee', '#4b3f9c', 11, 'WG'],
            pdf: ['#f7363f', '#fff', 8, 'PDF'],
            amazon: ['#eee', '#111', 17, 'a'],
            script: ['#e4e8ea', '#7ba9bd', 8, 'lipit'],
            nu: ['#eee', '#1e6b4c', 14, 'nu'],
            gg: ['#2378b8', '#fff', 11, 'GG'],
            mql: ['#2b5fae', '#fff', 6, 'MQL4'],
            dttw: ['#f2702c', '#fff', 5, 'DTTW.']
        };

        function iconFor(name) {
            const l = lettered[name];
            if (!l) return `<svg><use href="#${name}"/></svg>`;
            const [bg, color, size, text] = l;
            const y = Math.round(10 + size / 3);
            return `<svg viewBox="0 0 20 20"><path d="M0 0h20v20H0z" fill="${bg}"/>
                <text x="10" y="${y}" font-size="${size}" font-weight="700" fill="${color}" text-anchor="middle">${text}</text></svg>`;
        }

        function addTabs(id, list) {
            const strip = document.getElementById(id);
            list.forEach(item => {
                const [icon, state] = item.split(' ');
                const tab = document.createElement('button');
                tab.className = 'tab ' + (state || '');
                tab.setAttribute('aria-label', icon);
                tab.innerHTML = iconFor(icon);
                strip.appendChild(tab);
            });
        }

        addTabs('tabs-before', before);
        addTabs('tabs-after', after);
        addTabs('tabs-tight', tight);
    </script>
</body>
</html>
```
FILE: styles.css
```css
* { box-sizing: border-box; }
body { margin: 0; min-height: 100vh; display: flex; flex-direction: column; font-family: "Open Sans", sans-serif; font-size: 14px; background: #f7f7f7; overflow: hidden; }
button { margin: 0; padding: 0; border: none; background: none; font: inherit; color: inherit; cursor: pointer; }
a { color: inherit; text-decoration: none; }
svg { display: block; flex: none; }
h1, h2, h3 { margin: 0; font-weight: normal; }
.defs { position: absolute; width: 0; height: 0; }

/* tab strip */
.tabstrip { height: 40px; display: flex; align-items: center; background: #cdcdcd; border-bottom: 1px solid #bbb; }
.strip-btn { width: 60px; flex: none; display: flex; justify-content: center; }
.strip-btn svg, .new-tab svg, .tab-active svg, .win-controls svg { width: 20px; height: 20px; }
.tabs { display: flex; flex: none; }
.tabs.tight { flex: 0 1 863px; min-width: 0; }
.tab { width: 20px; height: 26px; display: flex; align-items: center; justify-content: center; border-left: 1px solid #777; color: #333; }
.tight .tab { flex: 1 1 0; width: auto; min-width: 0; }
.tight .tab:last-child { border-right: 1px solid #777; }
.tab svg { width: 19px; height: 20px; opacity: 0.6; }
.tight .tab svg { width: 18px; }
.tab.on svg { opacity: 1; }
.tab-active { width: 34px; height: 40px; flex: none; display: flex; align-items: center; justify-content: center; background: #f7f7f7; border-radius: 8px 8px 0 0; }
.new-tab { width: 44px; display: flex; justify-content: center; }
.new-tab svg { width: 18px; height: 18px; }
.win-controls { margin-left: auto; display: flex; }
.win-controls button { width: 57px; display: flex; justify-content: center; }
.win-controls svg { width: 18px; height: 18px; }

/* address row */
.toolbar { height: 48px; display: flex; align-items: center; padding: 0 0 1px 7px; }
.tool { width: 56px; display: flex; justify-content: center; }
.tool svg { width: 22px; height: 22px; }
.tool .avatar { width: 28px; height: 28px; }
.tool-sep { width: 1px; height: 20px; margin: 0 2px; background: #ccc; }
.address { flex: 1; height: 38px; margin: 0 8px 0 6px; padding: 0 20px; display: flex; align-items: center; background: #fff; border-radius: 19px; box-shadow: 0 0 4px #e4e4e4; }
.address svg { width: 22px; height: 22px; }
.url { flex: 1; padding-left: 20px; font-size: 16px; color: #767676; }
.url b { font-weight: normal; color: #111; }
.address button { margin-left: 28px; }
.bing { width: 66px; display: flex; justify-content: center; }
.bing svg { width: 38px; height: 38px; }

.main { flex: 1; display: flex; min-height: 0; }
.view { flex: 1; min-width: 0; display: flex; flex-direction: column; }

.bookmarks { height: 40px; display: flex; align-items: center; gap: 22px; padding: 0 17px 5px; color: #111; white-space: nowrap; }
.bookmarks a { display: flex; align-items: center; gap: 10px; }
.bookmarks svg { width: 20px; height: 20px; }
.bookmarks i { width: 1px; height: 20px; margin: 0 -9px; background: #ccc; }

/* sidebar */
.sidebar { width: 68px; padding: 2px 2px 0 0; display: flex; flex-direction: column; align-items: center; border-left: 1px solid #bbb; }
.sidebar button { height: 50px; display: flex; align-items: center; }
.sidebar svg { width: 22px; height: 22px; }
.sidebar .add { margin-top: 4px; }
.sidebar-foot { width: 34px; margin-top: auto; padding: 2px 0 4px; display: flex; flex-direction: column; align-items: center; border-top: 1px solid #bbb; }

/* app */
.app { flex: 1; display: flex; flex-direction: column; background: #444; color: #ddd; font-family: "Noto Sans", sans-serif; font-size: 15px; }
.app-header { height: 95px; display: flex; background: linear-gradient(#666, #3b3b3b); border-top: 1px solid #999; border-bottom: 1px solid #111; }
.brand { width: 24px; padding-top: 7px; writing-mode: vertical-rl; transform: rotate(180deg); line-height: 24px; font-size: 18px; color: #7d7d7d; }
.downloads { width: 276px; padding: 40px 0 0 66px; display: flex; align-items: flex-start; gap: 4px; }
.downloads button { width: 58px; height: 33px; background: linear-gradient(#5f7eae, #3c5a86); border: 2px solid #1c222c; font-size: 17px; font-weight: bold; line-height: 20px; text-shadow: 1px 1px 0 #000, -1px -1px 0 #000, 1px -1px 0 #000, -1px 1px 0 #000, 0 2px 2px #000; }
.mq { color: #ffe92f; }
.ex { color: #fff; }
.events { align-self: flex-end; height: 38px; margin-bottom: -1px; padding: 0 15px 2px 20px; display: flex; align-items: center; gap: 8px; background: #444; border: 1px solid #111; border-bottom: none; border-radius: 20px 20px 0 0; }
.events span { font-size: 17px; color: #bbb; text-shadow: 1px 1px 1px #111; }
.event-tabs { display: flex; height: 27px; border: 1px solid #666; }
.event-tabs button { padding: 0 13px; background: linear-gradient(#a0a0a0, #7b7b7b); border-right: 1px solid #5c5c5c; font-family: "Liberation Serif", serif; font-size: 21px; line-height: 24px; color: #111; white-space: nowrap; }
.event-tabs button:last-child { border-right: none; }
.event-tabs .current { padding: 0 10px; background: linear-gradient(#ff9a63, #d9480c); }
.event-tabs sub { font-size: 16px; line-height: 1px; color: #ffc79e; text-shadow: 1px 1px 1px #333; vertical-align: -3px; }
.app-links { margin-left: auto; padding: 0 6px 8px 0; display: flex; flex-direction: column; justify-content: space-between; align-items: flex-end; font-family: "DejaVu Sans Condensed", sans-serif; font-size: 14px; font-weight: bold; line-height: 20px; }
.app-links div { display: flex; gap: 14px; }
.lime { color: #bfff00; }
.coral { color: #ff6a42; }
.lilac { color: #9a94ff; }
.history { margin-right: 19px; font-size: 17px; line-height: 26px; color: #ccc; }

.workspace { flex: 1; display: flex; min-height: 0; }
.canvas { flex: 1; position: relative; }
.canvas h1 { padding-left: 11px; font-family: "Liberation Serif", serif; font-size: 25px; font-style: italic; line-height: 24px; color: #bbb; }
.wrench { width: 60px; height: 60px; margin: 2px 3px 0 0; border: 2px solid #2c2c2c; border-radius: 8px; background: linear-gradient(#6a6a6a, #9a9a9a); overflow: hidden; }
.wrench svg { width: 56px; height: 56px; }
.divider { width: 22px; margin-bottom: 2px; background: linear-gradient(90deg, #4c4c4c, #858585 50%, #6c6c6c 65%, #333); }

/* block diagram */
.wires { position: absolute; left: 0; top: 0; width: 450px; height: 700px; }
.wires path { fill: none; stroke: url(#g-wire); stroke-width: 2; }
.node { position: absolute; height: 23px; display: flex; background: #575757; border-radius: 12px; box-shadow: 0 1px 9px #111; line-height: 21px; }
.node small { width: 17px; padding-left: 2px; text-align: center; font-size: 12px; line-height: 23px; color: #aaa; }
.node span { padding: 0 8px 0 7px; border-radius: 12px; background: #a9c6ff; color: #223; }
.node i { position: absolute; width: 20px; height: 10px; }
.node .in { left: 40px; top: -10px; border-radius: 10px 10px 0 0; background: linear-gradient(#f6e6f8, #9c8f9e); }
.node .out { left: 40px; top: 23px; border-radius: 0 0 10px 10px; background: linear-gradient(#b84600, #f45c00 60%); }
.node .alt { right: 15px; top: 23px; border-radius: 0 0 10px 10px; background: linear-gradient(#a88a00, #f0c400 60%); }
.orange span { background: #ffd9a8; color: #332; }
.green span { background: #aee080; color: #232; }
.buy span { background: #008000; color: #fff; font-size: 14px; font-weight: bold; }
.node.buy .alt { background: linear-gradient(#666, #999 60%); }
.n1 { left: 244px; top: 87px; }
.n5 { left: 238px; top: 194px; }
.n7 { left: 256px; top: 331px; }
.n3 { left: 250px; top: 475px; }
.n9 { left: 275px; top: 606px; }
.n1 .in, .n1 .out { left: 37px; }
.n3 .in, .n3 .out { left: 52px; }
.n3 .alt { right: 21px; }
.n9 .in, .n9 .out { left: 36px; }

/* condition windows */
.panel { position: absolute; padding-bottom: 6px; background: #444; border: 1px solid #111; border-radius: 8px; box-shadow: 0 0 14px #111; }
.panel-ma { left: 465px; top: 30px; width: 623px; }
.panel-sar { left: 446px; top: 427px; width: 595px; }
.panel-title { height: 29px; padding-left: 4px; display: flex; align-items: center; border-bottom: 1px solid #111; border-radius: 8px 8px 0 0; background: linear-gradient(#262626, #666 50%, #262626); }
.panel-title svg { width: 22px; height: 20px; }
.panel-title .pin { width: 28px; height: 22px; margin: 0 21px 0 6px; }
.panel-title h2 { font-size: 15px; color: #ccc; }
.vars { position: absolute; left: 100%; top: 1px; height: 80px; width: 20px; background: linear-gradient(90deg, #4a4a5c, #60607a); border: 1px solid #222; border-left: none; border-radius: 0 8px 8px 0; box-shadow: 2px 2px 6px #222; writing-mode: vertical-rl; font-size: 16px; line-height: 18px; color: #bbb; }
.operands { display: flex; align-items: flex-start; gap: 10px; padding: 0 9px; }
.operand { width: 270px; }
.operand.right { flex: 1; width: auto; }
h3 { height: 13px; font-family: "Liberation Sans", sans-serif; font-size: 12px; line-height: 14px; text-align: center; color: #888; }
.box { padding: 1px 0 5px; background: #444450; border: 1px solid #2a2a30; border-radius: 4px; }
.rows { padding: 5px 8px 0 5px; }
.row { height: 26px; display: flex; align-items: center; gap: 3px; }
.row.short { height: 24px; }
.row label { flex: 1; padding-bottom: 2px; line-height: 20px; white-space: nowrap; }

select, input { font: inherit; color: #ddd; }
.select { position: relative; display: inline-flex; }
.select select { appearance: none; height: 23px; margin: 0; padding: 0 28px 2px 6px; background: #333; border: 1px solid #000; border-radius: 4px 0 0 4px; }
.select::after { content: "▼"; position: absolute; right: 0; top: -1px; width: 24px; height: 25px; background: linear-gradient(#555, #404040); border: 1px solid #111; font-family: "DejaVu Sans", sans-serif; font-size: 10px; line-height: 22px; text-align: center; color: #111; pointer-events: none; }
.picker { height: 25px; display: flex; align-items: center; }
.picker svg { width: 22px; height: 21px; border-left: 2px solid #333; background: #333; }
.picker select { border-radius: 0; height: 22px; }
.picker svg + .select select { padding-left: 4px; border-left: none; }
.fn { font-family: "Liberation Serif", serif; font-size: 16px; font-style: italic; font-weight: bold; fill: #222; }
input[type="text"] { width: 31px; height: 22px; padding: 0 6px; background: #333; border: 1px solid #000; border-radius: 4px; }
#m-period { width: 39px; }
#s-inc, #s-max { width: 34px; padding: 0 5px; }
input[type="checkbox"] { appearance: none; width: 15px; height: 15px; margin: 0; background: #555; border: 1px solid #222; border-radius: 3px; }
input.off { background: transparent; border-color: #4c4c5a; }
.fold { display: block; width: calc(100% - 10px); height: 18px; margin: 3px 5px 0; background: linear-gradient(#4e4e60, #38384a); border: 1px solid #2c2c26; border-bottom: 1px dotted #66664c; border-radius: 7px 7px 0 0; font-family: "DejaVu Sans Condensed", sans-serif; font-size: 12px; font-weight: bold; line-height: 16px; color: #c0c090; text-shadow: 1px 1px 1px #111; }
.more { margin: 3px 5px 0; background: #555566; border: 1px solid #33332a; border-top: none; border-radius: 7px 7px 0 0; }
.more .fold { width: 100%; margin: 0; color: #8c8c80; background: linear-gradient(#3c3c4e, #555568); }
.more .row { padding: 0 4px 0 3px; gap: 2px; }

.operator { width: 67px; }
.operator select { appearance: none; width: 100%; height: 38px; margin: 0; padding: 0 0 0 20px; background: #333; border: 1px solid #000; border-radius: 4px; font-size: 20px; background-image: linear-gradient(45deg, transparent 45%, #eee 45%, #eee 60%, transparent 60%), linear-gradient(-45deg, transparent 45%, #eee 45%, #eee 60%, transparent 60%); background-size: 6px 6px; background-position: 51px 17px, 56px 17px; background-repeat: no-repeat; }

.status { margin: 11px 2px 0 4px; height: 31px; padding: 0 0 1px 4px; display: flex; align-items: center; background: #445656; border: 1px solid #3c4432; border-top: none; font-size: 14px; font-weight: bold; color: #9aabab; }
.status input[type="checkbox"] { margin: 0 11px 0 24px; background: #fff; border-color: #888; }
.status input[type="text"] { width: 63px; height: 23px; background: #666; }
.actions { margin-top: 8px; padding: 0 28px 0 33px; display: flex; justify-content: space-between; }
.actions button { height: 22px; background: linear-gradient(#555, #3a3a3a); border: 1px solid #161616; border-radius: 6px; font-size: 14px; font-weight: bold; line-height: 18px; }
.actions .update { width: 47%; color: #34a834; }
.actions .delete { width: 42%; color: #d00000; }

/* taskbar */
.taskbar { height: 59px; display: flex; align-items: center; background: linear-gradient(90deg, #2a1d4a, #1d2648 12%, #182c48 26%, #183034 40%, #163024 55%, #163024); color: #fff; }
.taskbar button { position: relative; width: 55px; height: 50px; display: flex; align-items: center; justify-content: center; border-radius: 6px; flex: none; }
.taskbar button svg { width: 30px; height: 30px; }
.taskbar button .mail { width: 36px; }
.taskbar .start { margin: 0 6px 0 21px; }
.search { width: 273px; height: 38px; padding: 0 7px 0 12px; display: flex; align-items: center; background: #f3f3f6; border-radius: 19px; margin-right: 3px; }
.search svg { width: 22px; height: 22px; }
.search .search-bing { width: 26px; height: 26px; }
.search input { flex: 1; min-width: 0; padding: 0 10px; border: none; background: none; font-size: 17px; color: #555; }
.search input[type="text"] { width: auto; background: none; border: none; }
.search input::placeholder { color: #555; }
.run::after { content: ""; position: absolute; left: 24px; bottom: 0; width: 7px; height: 4px; border-radius: 2px; background: #96a39f; }
.taskbar .active { background: #27404a; }
.active::after { left: 18px; width: 20px; background: #4cc2ff; }
.taskbar .alert { background: #492a2c; }
.alert::after { background: #ff99a4; }
.taskbar button b { position: absolute; right: 6px; top: 2px; width: 20px; height: 20px; border-radius: 10px; font-size: 13px; font-weight: normal; line-height: 20px; text-align: center; }
.taskbar .weather b { right: 8px; }
.red { background: #c42b1c; }
.cyan { background: #4cc2ff; color: #111; }
.pink { background: #f0555c; }
.taskbar button .square { width: 26px; height: 15px; right: 4px; top: 8px; border-radius: 3px; background: #f03e36; font-size: 11px; line-height: 15px; }
.tray { margin-left: auto; padding-right: 25px; display: flex; align-items: center; gap: 8px; }
.tray svg { width: 22px; height: 22px; }
.tray svg:first-child { margin-right: 10px; }
.clock { margin-left: 12px; font-size: 15px; line-height: 21px; text-align: right; }
.tray b { width: 20px; height: 20px; border-radius: 10px; background: #4cc2ff; color: #111; font-size: 12px; font-weight: normal; line-height: 20px; text-align: center; }
```
